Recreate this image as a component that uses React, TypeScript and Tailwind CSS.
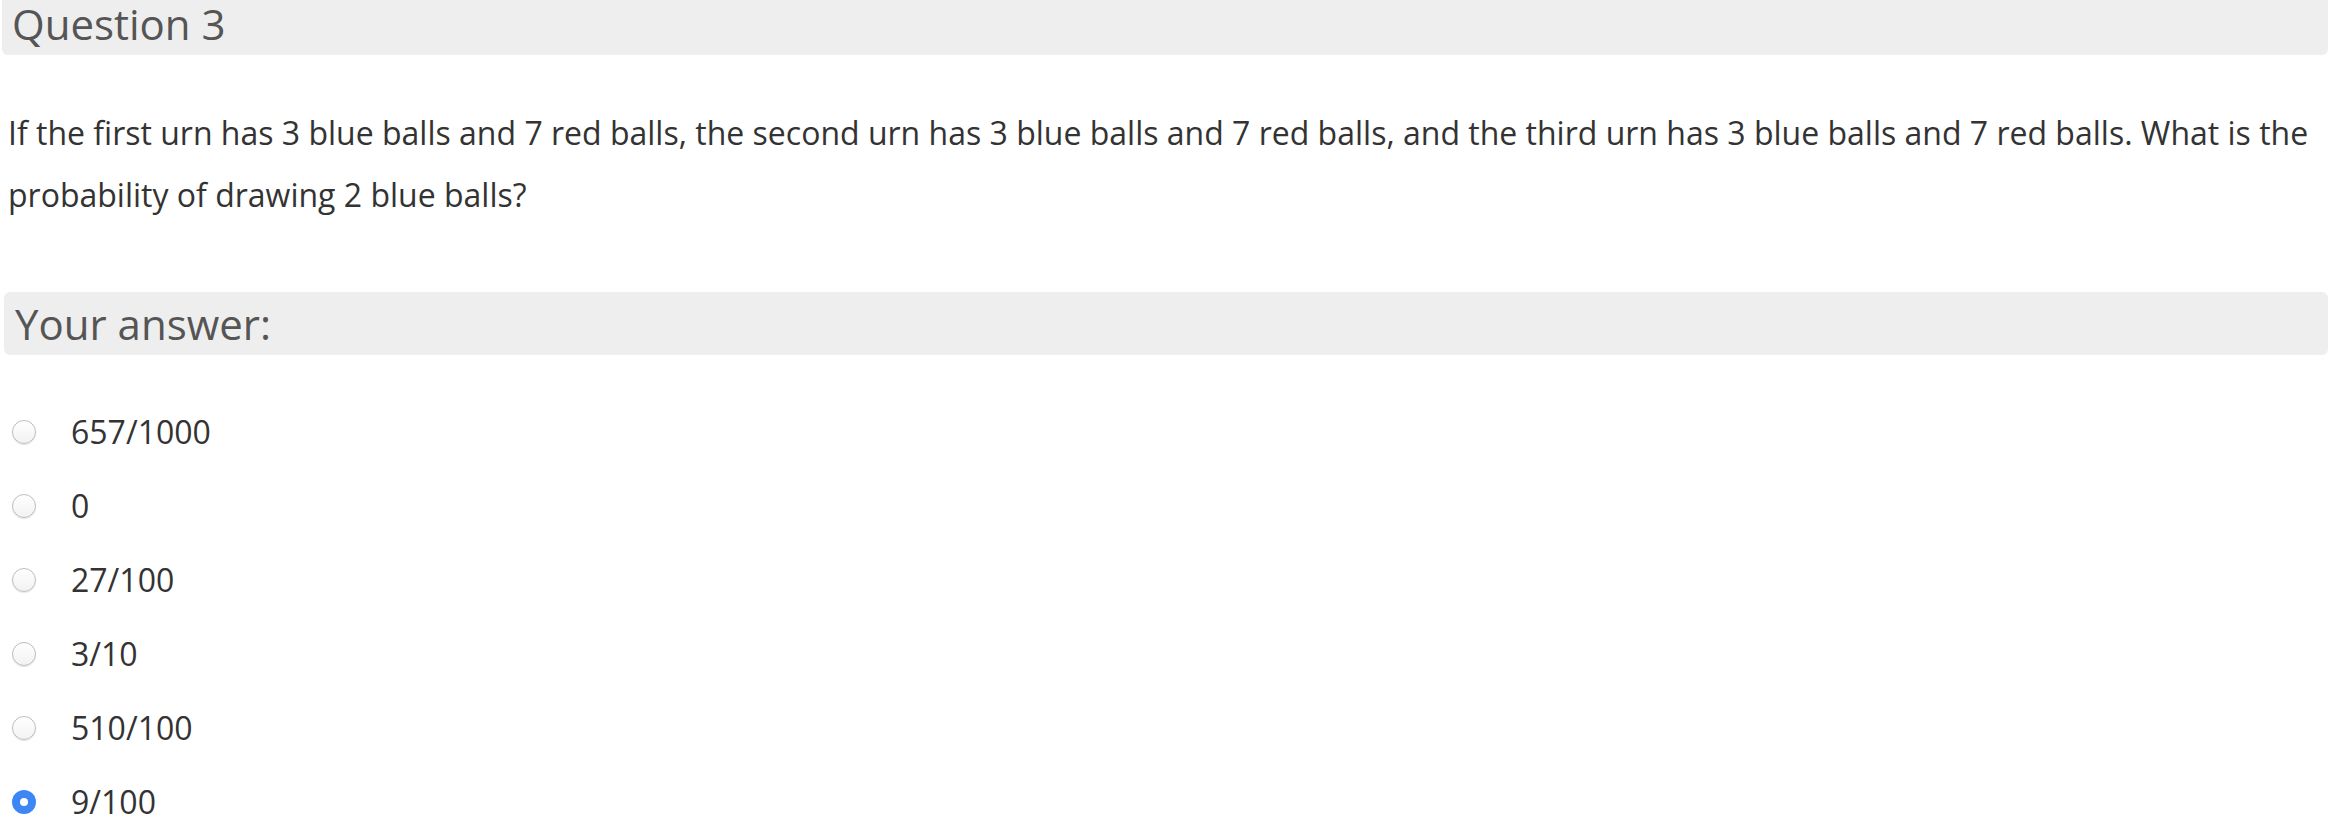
const options = [
  { label: "657/1000", checked: false },
  { label: "0", checked: false },
  { label: "27/100", checked: false },
  { label: "3/10", checked: false },
  { label: "510/100", checked: false },
  { label: "9/100", checked: true },
];

const Radio = ({ checked }: { checked: boolean }) =>
  checked ? (
    <span className="w-[24px] h-[24px] rounded-full bg-[#3f86f5] flex items-center justify-center shrink-0">
      <span className="w-[8px] h-[8px] rounded-full bg-white" />
    </span>
  ) : (
    <span className="w-[24px] h-[24px] rounded-full border border-[#bdbdbd] bg-gradient-to-b from-white to-[#f2f2f2] shadow-[0_1px_1px_rgba(0,0,0,0.1)] shrink-0" />
  );

const App = () => {
  return (
    <div className="min-h-screen bg-white font-['Open_Sans',sans-serif]">
      <div className="ml-[2px] h-[55px] bg-[#eeeeee] rounded-b-md pl-[10px]">
        <h2 className="text-[42px] leading-[47px] text-[#555555] font-normal">Question 3</h2>
      </div>

      <p className="mt-[47px] pl-[8px] pr-[10px] text-[32px] leading-[62px] text-[#333333]">
        If the first urn has 3 blue balls and 7 red balls, the second urn has 3 blue balls and 7 red balls, and the third urn has 3 blue balls and 7 red balls. What is the probability of drawing 2 blue balls?
      </p>

      <div className="mt-[66px] ml-[4px] h-[63px] bg-[#eeeeee] rounded-md pl-[11px]">
        <h3 className="text-[42px] leading-[63px] text-[#555555] font-normal">Your answer:</h3>
      </div>

      <div className="mt-[40px] flex flex-col">
        {options.map((o) => (
          <label key={o.label} className="h-[74px] flex items-center pl-[12px] gap-[35px]">
            <Radio checked={o.checked} />
            <span className="text-[32px] leading-[74px] text-[#333333]">{o.label}</span>
          </label>
        ))}
      </div>
    </div>
  );
};

export default App;
